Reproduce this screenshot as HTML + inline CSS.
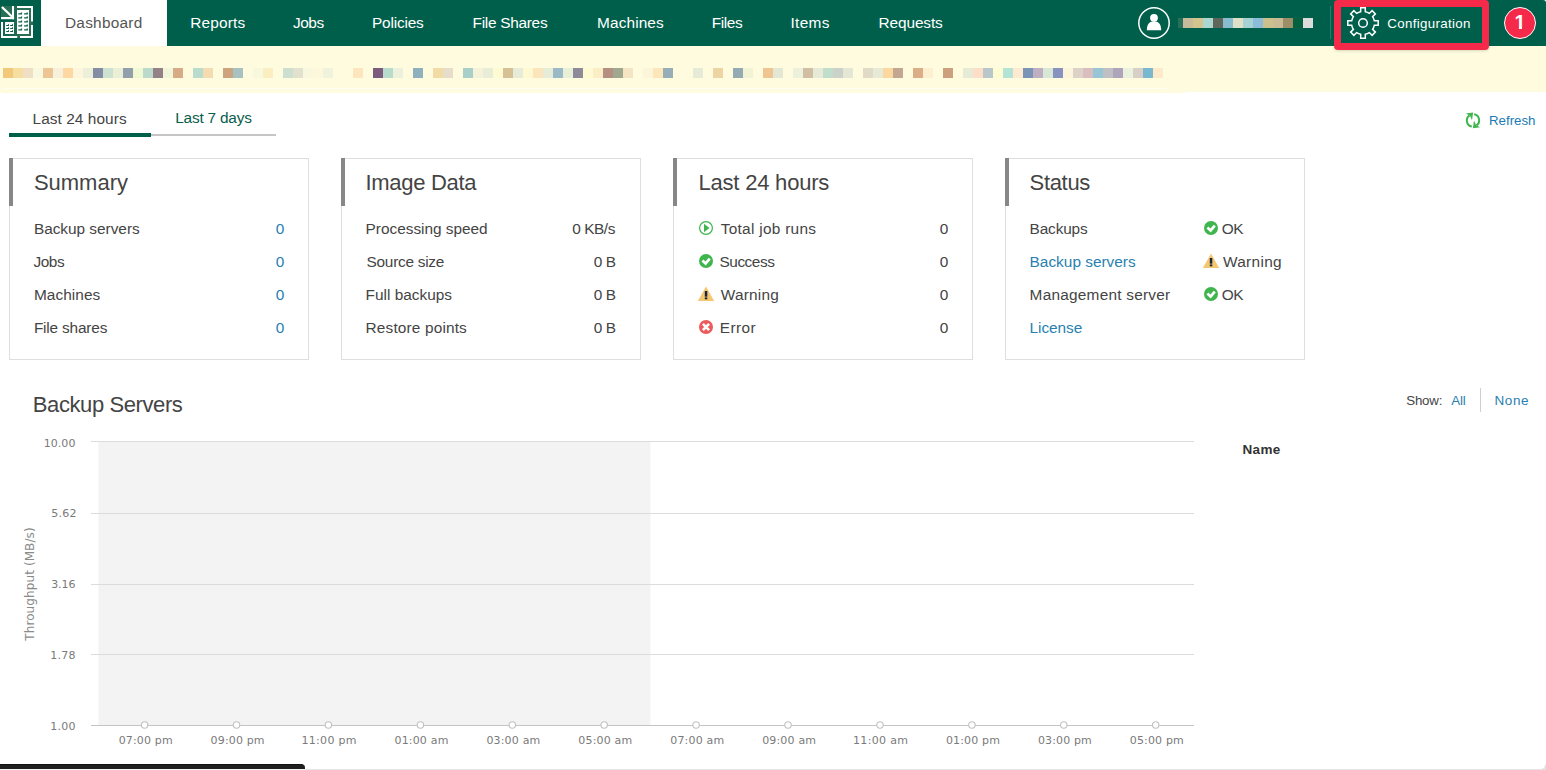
<!DOCTYPE html>
<html lang="en"><head><meta charset="utf-8"><title>Dashboard</title>
<style>
html,body{margin:0;padding:0}
body{width:1546px;height:770px;overflow:hidden;background:#fff;position:relative;font-family:"Liberation Sans", sans-serif;}
.abs{position:absolute;display:block}
.t{position:absolute;white-space:nowrap;display:block;margin:0;font-weight:400}
#hdr{position:absolute;left:0;top:0;width:1546px;height:46px;background:#005f4b;border-top-right-radius:3px}
#tab{position:absolute;left:41px;top:0;width:126px;height:46px;background:#fff}
#banner{position:absolute;left:0;top:46px;width:1546px;height:46px;background:#fffbde}
#banner i{position:absolute;top:22px;width:10px;height:10px}
#banner s{position:absolute;left:0;top:46px;width:1186px;height:1px;background:#fffbde}
#banner u{position:absolute;left:3px;top:42px;width:1163px;height:1px;background:#fffef3}
#umos i{position:absolute;top:18px;height:10px;width:10px}
#cfg{position:absolute;z-index:5;left:1334px;top:0px;width:141px;height:36px;border:7px solid #f5294a;border-radius:4px;box-shadow:0 1px 3px rgba(0,0,0,.15)}
#sep{position:absolute;left:1330px;top:6px;width:1px;height:33px;background:#2c7a68}
#badge{position:absolute;left:1504px;top:7px;width:30px;height:30px;border-radius:50%;background:#f5294a;border:1.8px solid #fff;box-sizing:border-box;width:32px;height:32px}
#badge span{position:absolute;left:9.4px;top:2.2px;color:#fff;font-weight:700;font-size:20px;line-height:24px;clip-path:polygon(0 0,100% 0,100% 16.9px,7.6px 16.9px,7.6px 100%,4.5px 100%,4.5px 16.9px,0 16.9px)}
.card{position:absolute;top:158px;width:298px;height:200px;border:1px solid #dedede;background:#fff}
.card b{position:absolute;left:-1px;top:-1px;width:4px;height:48px;background:#878787}
#tl1{position:absolute;left:9px;top:133px;width:142px;height:4px;background:#005f4b}
#tl2{position:absolute;left:151px;top:134px;width:125px;height:2px;background:#c6c6c6}
#vsep{position:absolute;left:1480px;top:388px;width:1px;height:24px;background:#cfcfcf}
#ylab{position:absolute;left:30px;top:583.5px;width:0;height:0}
#ylab span{position:absolute;white-space:nowrap;transform:translate(-50%,-50%) rotate(-90deg);font-family:'DejaVu Sans','Liberation Sans',sans-serif;font-size:12px;color:#8a8a8a;letter-spacing:0.1px}
#blk{position:absolute;left:0;top:764px;width:305px;height:5px;background:#1f1f1f;border-top:1px solid #121212;box-sizing:border-box;border-top-right-radius:4px}
#botl{position:absolute;left:0;top:769px;width:1546px;height:1px;background:linear-gradient(90deg,#f4f4f4 0,#f4f4f4 305px,#e4e4e4 305px)}
#brc{position:absolute;left:1540px;top:764px;width:6px;height:6px;background:radial-gradient(circle at 0 0,rgba(230,230,230,0) 4.6px,#e2e2e2 5.8px)}
</style></head><body>
<div id="hdr"></div><div id="tab"></div>
<svg class="abs" style="left:0;top:0" width="41" height="46" viewBox="0 0 41 46">
<rect x="1" y="6" width="32" height="32" fill="#2a6e56"/>
<rect x="0" y="19.2" width="15" height="2.6" fill="#005f4b"/>
<rect x="3" y="21.8" width="11.2" height="14" fill="#16664f"/>
<path d="M1.9 7.0 L12.4 17" stroke="#fff" stroke-width="2.3" fill="none"/>
<rect x="12" y="6" width="2.2" height="13.2" fill="#fff"/>
<rect x="1" y="17" width="13.2" height="2.2" fill="#fff"/>
<rect x="14.2" y="6" width="2.6" height="30" fill="#1d6a52"/>
<path d="M17 7 H32 V21.6 M32 25 V37 H20 M17.2 37 H2 V22" stroke="#fff" stroke-width="2" fill="none"/>
<rect x="17" y="10" width="12" height="24" fill="#fff"/>
<rect x="5" y="22" width="9" height="12" fill="#fff"/>
<g fill="#0a6048">
<path d="M18.3 14.6h3.8v-2.2h-1.3v.9h-2.5zM24.1 14.6h3.8v-2.2h-1.3v.9h-2.5z"/>
<path d="M18.3 18.6h3.8v-2.2h-1.3v.9h-2.5zM24.1 18.6h3.8v-2.2h-1.3v.9h-2.5z"/>
<path d="M18.3 22.6h3.8v-2.2h-1.3v.9h-2.5zM24.1 22.6h3.8v-2.2h-1.3v.9h-2.5z"/>
<path d="M18.3 26.6h3.8v-2.2h-1.3v.9h-2.5zM24.1 26.6h3.8v-2.2h-1.3v.9h-2.5z"/>
<path d="M18.3 30.6h3.8v-2.2h-1.3v.9h-2.5zM24.1 30.6h3.8v-2.2h-1.3v.9h-2.5z"/>
<path d="M6.2 26.0h2.8v-1.7h-1v.7h-1.8zM10.2 26.0h2.8v-1.7h-1v.7h-1.8z"/>
<path d="M6.2 29.0h2.8v-1.7h-1v.7h-1.8zM10.2 29.0h2.8v-1.7h-1v.7h-1.8z"/>
<path d="M6.2 32.0h2.8v-1.7h-1v.7h-1.8zM10.2 32.0h2.8v-1.7h-1v.7h-1.8z"/>
</g></svg>
<svg class="abs" style="left:1136px;top:5px" width="36" height="36" viewBox="0 0 36 36">
<circle cx="18" cy="18" r="15.2" fill="none" stroke="#fff" stroke-width="1.5"/>
<circle cx="18" cy="12.8" r="3.9" fill="#fff"/>
<path d="M10.8 25.2 C10.8 19.3 13.5 16.2 18 16.2 C22.5 16.2 25.2 19.3 25.2 25.2Z" fill="#fff"/></svg>
<div id="umos"><i style="left:1178px;width:5px;background:#2a6e5c"></i><i style="left:1183px;width:10px;background:#c8bb9a"></i><i style="left:1193px;width:10px;background:#d3c38c"></i><i style="left:1203px;width:10px;background:#acd6d0"></i><i style="left:1213px;width:10px;background:#5f665b"></i><i style="left:1223px;width:10px;background:#88bdd0"></i><i style="left:1233px;width:10px;background:#dfe0c6"></i><i style="left:1243px;width:10px;background:#a6d2d3"></i><i style="left:1253px;width:10px;background:#8bbcd8"></i><i style="left:1263px;width:10px;background:#ccc18c"></i><i style="left:1273px;width:10px;background:#c9ba96"></i><i style="left:1283px;width:10px;background:#9c8f67"></i><i style="left:1293px;width:10px;background:#04603f"></i><i style="left:1303px;width:10px;background:#dddcdc"></i></div>
<div id="sep"></div>
<div id="cfg"></div>
<svg class="abs" style="left:1343px;top:3px" width="40" height="40" viewBox="1343 3 40 40"><path d="M1360.70 11.73L1360.70 7.80L1365.30 7.80L1365.30 11.73A11.5 11.5 0 0 1 1369.34 13.41L1372.12 10.63L1375.37 13.88L1372.59 16.66A11.5 11.5 0 0 1 1374.27 20.70L1378.20 20.70L1378.20 25.30L1374.27 25.30A11.5 11.5 0 0 1 1372.59 29.34L1375.37 32.12L1372.12 35.37L1369.34 32.59A11.5 11.5 0 0 1 1365.30 34.27L1365.30 38.20L1360.70 38.20L1360.70 34.27A11.5 11.5 0 0 1 1356.66 32.59L1353.88 35.37L1350.63 32.12L1353.41 29.34A11.5 11.5 0 0 1 1351.73 25.30L1347.80 25.30L1347.80 20.70L1351.73 20.70A11.5 11.5 0 0 1 1353.41 16.66L1350.63 13.88L1353.88 10.63L1356.66 13.41A11.5 11.5 0 0 1 1360.70 11.73Z" fill="none" stroke="#fff" stroke-width="1.5" stroke-linejoin="miter"/><circle cx="1363" cy="23" r="4.3" fill="none" stroke="#fff" stroke-width="1.5"/></svg>
<div id="badge"><span>1</span></div>
<div id="banner"><i style="left:3px;background:#f2c97a"></i><i style="left:13px;background:#f6dda0"></i><i style="left:23px;background:#efe0c5"></i><i style="left:33px;background:#f8f9e0"></i><i style="left:43px;background:#edc696"></i><i style="left:53px;background:#f7f1dc"></i><i style="left:63px;background:#fdd8a3"></i><i style="left:73px;background:#fef6dc"></i><i style="left:83px;background:#edf0d8"></i><i style="left:93px;background:#848da3"></i><i style="left:103px;background:#cde2d0"></i><i style="left:113px;background:#e9f0d6"></i><i style="left:123px;background:#93a0ab"></i><i style="left:133px;background:#f0f9d2"></i><i style="left:143px;background:#bcdacb"></i><i style="left:153px;background:#958088"></i><i style="left:163px;background:#f1f6da"></i><i style="left:173px;background:#d7ab85"></i><i style="left:193px;background:#b9dccd"></i><i style="left:203px;background:#f4dbb0"></i><i style="left:223px;background:#cea47f"></i><i style="left:233px;background:#a8c2c2"></i><i style="left:253px;background:#f7f8de"></i><i style="left:263px;background:#fbeec0"></i><i style="left:283px;background:#cde0cf"></i><i style="left:293px;background:#e2e1cd"></i><i style="left:303px;background:#f8f8de"></i><i style="left:313px;background:#fdf7dc"></i><i style="left:323px;background:#f0f3dc"></i><i style="left:353px;background:#fde6be"></i><i style="left:373px;background:#7c5b7c"></i><i style="left:383px;background:#b8dccb"></i><i style="left:393px;background:#edf1dc"></i><i style="left:413px;background:#8fb1bd"></i><i style="left:433px;background:#f3dba5"></i><i style="left:443px;background:#e6deca"></i><i style="left:463px;background:#a8cfc8"></i><i style="left:473px;background:#f4f2d8"></i><i style="left:483px;background:#e9edd8"></i><i style="left:493px;background:#fefad2"></i><i style="left:503px;background:#d6c096"></i><i style="left:513px;background:#e6ecd8"></i><i style="left:523px;background:#fef9d0"></i><i style="left:533px;background:#fce5bb"></i><i style="left:543px;background:#e6ecd8"></i><i style="left:553px;background:#9bb9c6"></i><i style="left:563px;background:#e9f0d8"></i><i style="left:573px;background:#8e8a9a"></i><i style="left:583px;background:#fefad2"></i><i style="left:593px;background:#fbeec6"></i><i style="left:603px;background:#b58f80"></i><i style="left:613px;background:#a0a98f"></i><i style="left:623px;background:#f5e4c4"></i><i style="left:643px;background:#fcf5da"></i><i style="left:653px;background:#fde6ba"></i><i style="left:663px;background:#96aeb7"></i><i style="left:693px;background:#e6ebd8"></i><i style="left:713px;background:#ecd5a2"></i><i style="left:733px;background:#94abb3"></i><i style="left:743px;background:#f1f3d4"></i><i style="left:763px;background:#efc592"></i><i style="left:773px;background:#e3e7d4"></i><i style="left:793px;background:#ebf1da"></i><i style="left:803px;background:#d1bea3"></i><i style="left:813px;background:#e6ead6"></i><i style="left:823px;background:#c0decb"></i><i style="left:833px;background:#ccd2ca"></i><i style="left:843px;background:#e3e7d4"></i><i style="left:863px;background:#e1dac6"></i><i style="left:873px;background:#e6ead6"></i><i style="left:883px;background:#fcd8a0"></i><i style="left:893px;background:#c4a790"></i><i style="left:913px;background:#dcae88"></i><i style="left:923px;background:#feefd0"></i><i style="left:943px;background:#cca07c"></i><i style="left:963px;background:#e6ebd6"></i><i style="left:973px;background:#fedec8"></i><i style="left:983px;background:#bac7ca"></i><i style="left:993px;background:#fefcd2"></i><i style="left:1003px;background:#b5e4d4"></i><i style="left:1013px;background:#fdead0"></i><i style="left:1023px;background:#7994b6"></i><i style="left:1033px;background:#bfafc2"></i><i style="left:1043px;background:#d8e7d6"></i><i style="left:1053px;background:#8793be"></i><i style="left:1063px;background:#fcf5dc"></i><i style="left:1073px;background:#dcd2c8"></i><i style="left:1083px;background:#d9bec0"></i><i style="left:1093px;background:#96c6d6"></i><i style="left:1103px;background:#c0bfc4"></i><i style="left:1113px;background:#afa5bb"></i><i style="left:1123px;background:#eaf1dc"></i><i style="left:1133px;background:#d8cfc6"></i><i style="left:1143px;background:#7ab8cf"></i><i style="left:1153px;background:#fee9c8"></i><u></u><s></s></div>
<div id="tl1"></div><div id="tl2"></div>
<svg class="abs" style="left:1464px;top:111px" width="18" height="19" viewBox="0 0 18 19">
<g fill="none" stroke="#3fb54d" stroke-width="2">
<path d="M7.8 15.5 A6.1 6.1 0 0 1 5.6 4.4"/>
<path d="M10.2 3.3 A6.1 6.1 0 0 1 12.4 14.4"/>
</g>
<path d="M1.9 2.6 L9.1 1.6 L8.0 9.2 L6.0 4.8 Z" fill="#3fb54d"/>
<path d="M16.1 16.2 L8.9 17.2 L10.0 9.6 L12.0 14.0 Z" fill="#3fb54d"/>
</svg>
<div class="card" style="left:9px"><b></b></div><div class="card" style="left:341px"><b></b></div><div class="card" style="left:673px"><b></b></div><div class="card" style="left:1005px"><b></b></div>
<svg class="abs" style="left:698px;top:220px" width="16" height="16" viewBox="0 0 16 16"><circle cx="8" cy="8" r="6.4" fill="#fff" stroke="#3fb54d" stroke-width="1.2"/><path d="M6.0 3.7 L11.4 8 L6.0 12.3Z" fill="#3fb54d"/></svg><svg class="abs" style="left:698px;top:253px" width="16" height="16" viewBox="0 0 16 16"><circle cx="8" cy="8" r="7" fill="#3fb54d"/><path d="M4.4 7.5 L7.6 10.5 L11.8 5.7" fill="none" stroke="#fff" stroke-width="2.7"/></svg><svg class="abs" style="left:697px;top:286px" width="18" height="16" viewBox="0 0 18 16"><path d="M9 0.6 L17.2 14.9 L0.8 14.9Z" fill="#f3c870"/><rect x="7.8" y="5.0" width="2.5" height="5.7" fill="#1c2340"/><rect x="7.8" y="11.4" width="2.5" height="1.9" fill="#1c2340"/></svg><svg class="abs" style="left:698px;top:319px" width="16" height="16" viewBox="0 0 16 16"><circle cx="8" cy="8" r="7" fill="#ee5a5a"/><path d="M4.9 4.9 L11.1 11.1 M11.1 4.9 L4.9 11.1" fill="none" stroke="#fff" stroke-width="2.7"/></svg><svg class="abs" style="left:1203px;top:220px" width="16" height="16" viewBox="0 0 16 16"><circle cx="8" cy="8" r="7" fill="#3fb54d"/><path d="M4.4 7.5 L7.6 10.5 L11.8 5.7" fill="none" stroke="#fff" stroke-width="2.7"/></svg><svg class="abs" style="left:1202px;top:253px" width="18" height="16" viewBox="0 0 18 16"><path d="M9 0.6 L17.2 14.9 L0.8 14.9Z" fill="#f3c870"/><rect x="7.8" y="5.0" width="2.5" height="5.7" fill="#1c2340"/><rect x="7.8" y="11.4" width="2.5" height="1.9" fill="#1c2340"/></svg><svg class="abs" style="left:1203px;top:286px" width="16" height="16" viewBox="0 0 16 16"><circle cx="8" cy="8" r="7" fill="#3fb54d"/><path d="M4.4 7.5 L7.6 10.5 L11.8 5.7" fill="none" stroke="#fff" stroke-width="2.7"/></svg>
<svg class="abs" style="left:0;top:430px" width="1546" height="310" viewBox="0 430 1546 310"><rect x="98.4" y="441.5" width="552" height="284" fill="#f3f3f3"/><line x1="91" x2="1194" y1="441.5" y2="441.5" stroke="#dcdcdc" stroke-width="1"/><line x1="91" x2="1194" y1="513.5" y2="513.5" stroke="#dcdcdc" stroke-width="1"/><line x1="91" x2="1194" y1="584.5" y2="584.5" stroke="#dcdcdc" stroke-width="1"/><line x1="91" x2="1194" y1="654.5" y2="654.5" stroke="#dcdcdc" stroke-width="1"/><line x1="91" x2="1194" y1="725.5" y2="725.5" stroke="#c4c4c4" stroke-width="1"/><circle cx="144.6" cy="725" r="3.2" fill="#fff" stroke="#c2c2c2" stroke-width="1.1"/><circle cx="236.5" cy="725" r="3.2" fill="#fff" stroke="#c2c2c2" stroke-width="1.1"/><circle cx="328.4" cy="725" r="3.2" fill="#fff" stroke="#c2c2c2" stroke-width="1.1"/><circle cx="420.4" cy="725" r="3.2" fill="#fff" stroke="#c2c2c2" stroke-width="1.1"/><circle cx="512.3" cy="725" r="3.2" fill="#fff" stroke="#c2c2c2" stroke-width="1.1"/><circle cx="604.2" cy="725" r="3.2" fill="#fff" stroke="#c2c2c2" stroke-width="1.1"/><circle cx="696.1" cy="725" r="3.2" fill="#fff" stroke="#c2c2c2" stroke-width="1.1"/><circle cx="788.0" cy="725" r="3.2" fill="#fff" stroke="#c2c2c2" stroke-width="1.1"/><circle cx="880.0" cy="725" r="3.2" fill="#fff" stroke="#c2c2c2" stroke-width="1.1"/><circle cx="971.9" cy="725" r="3.2" fill="#fff" stroke="#c2c2c2" stroke-width="1.1"/><circle cx="1063.8" cy="725" r="3.2" fill="#fff" stroke="#c2c2c2" stroke-width="1.1"/><circle cx="1155.7" cy="725" r="3.2" fill="#fff" stroke="#c2c2c2" stroke-width="1.1"/></svg>
<div id="ylab"><span>Throughput (MB/s)</span></div>
<div id="vsep"></div>
<div id="blk"></div><div id="botl"></div><div id="brc"></div>
<span class="t" style="left:65.00px;top:12px;font-size:15.4px;line-height:21px;color:#555;letter-spacing:0.246px;">Dashboard</span>
<span class="t" style="left:190.30px;top:12px;font-size:15.4px;line-height:21px;color:#fff;letter-spacing:0.151px;">Reports</span>
<span class="t" style="left:293.02px;top:12px;font-size:15.4px;line-height:21px;color:#fff;letter-spacing:-0.450px;">Jobs</span>
<span class="t" style="left:371.90px;top:12px;font-size:15.4px;line-height:21px;color:#fff;letter-spacing:-0.163px;">Policies</span>
<span class="t" style="left:472.60px;top:12px;font-size:15.4px;line-height:21px;color:#fff;letter-spacing:-0.284px;">File Shares</span>
<span class="t" style="left:597.10px;top:12px;font-size:15.4px;line-height:21px;color:#fff;letter-spacing:0.104px;">Machines</span>
<span class="t" style="left:711.80px;top:12px;font-size:15.4px;line-height:21px;color:#fff;letter-spacing:-0.400px;">Files</span>
<span class="t" style="left:790.40px;top:12px;font-size:15.4px;line-height:21px;color:#fff;letter-spacing:0.367px;">Items</span>
<span class="t" style="left:878.60px;top:12px;font-size:15.4px;line-height:21px;color:#fff;letter-spacing:-0.118px;">Requests</span>
<span class="t" style="left:1387.30px;top:14px;font-size:13.3px;line-height:19px;color:#fff;letter-spacing:0.325px;">Configuration</span>
<span class="t" style="left:32.50px;top:108px;font-size:15.4px;line-height:21px;color:#444;letter-spacing:0.070px;">Last 24 hours</span>
<span class="t" style="left:175.20px;top:107px;font-size:15.4px;line-height:21px;color:#0a5e4c;letter-spacing:-0.202px;">Last 7 days</span>
<span class="t" style="left:1489.00px;top:111px;font-size:13.3px;line-height:19px;color:#1b7bb4;letter-spacing:-0.011px;">Refresh</span>
<span class="t" style="left:33.90px;top:168px;font-size:22px;line-height:29px;color:#444;letter-spacing:-0.004px;">Summary</span>
<span class="t" style="left:365.50px;top:168px;font-size:22px;line-height:29px;color:#444;letter-spacing:-0.310px;">Image Data</span>
<span class="t" style="left:698.50px;top:168px;font-size:22px;line-height:29px;color:#444;letter-spacing:-0.209px;">Last 24 hours</span>
<span class="t" style="left:1029.60px;top:168px;font-size:22px;line-height:29px;color:#444;letter-spacing:-0.334px;">Status</span>
<span class="t" style="left:33.90px;top:218px;font-size:15.4px;line-height:21px;color:#444;letter-spacing:-0.021px;">Backup servers</span>
<span class="t" style="left:275.85px;top:218px;font-size:15.4px;line-height:21px;color:#2a7fb0;letter-spacing:0.000px;">0</span>
<span class="t" style="left:33.52px;top:251px;font-size:15.4px;line-height:21px;color:#444;letter-spacing:-0.450px;">Jobs</span>
<span class="t" style="left:275.85px;top:251px;font-size:15.4px;line-height:21px;color:#2a7fb0;letter-spacing:0.000px;">0</span>
<span class="t" style="left:33.90px;top:284px;font-size:15.4px;line-height:21px;color:#444;letter-spacing:0.075px;">Machines</span>
<span class="t" style="left:275.85px;top:284px;font-size:15.4px;line-height:21px;color:#2a7fb0;letter-spacing:0.000px;">0</span>
<span class="t" style="left:33.90px;top:317px;font-size:15.4px;line-height:21px;color:#444;letter-spacing:-0.177px;">File shares</span>
<span class="t" style="left:275.85px;top:317px;font-size:15.4px;line-height:21px;color:#2a7fb0;letter-spacing:0.000px;">0</span>
<span class="t" style="left:365.60px;top:218px;font-size:15.4px;line-height:21px;color:#444;letter-spacing:-0.019px;">Processing speed</span>
<span class="t" style="left:572.31px;top:218px;font-size:15.4px;line-height:21px;color:#444;letter-spacing:-0.450px;">0 KB/s</span>
<span class="t" style="left:366.60px;top:251px;font-size:15.4px;line-height:21px;color:#444;letter-spacing:-0.275px;">Source size</span>
<span class="t" style="left:593.76px;top:251px;font-size:15.4px;line-height:21px;color:#444;letter-spacing:-0.450px;">0 B</span>
<span class="t" style="left:365.60px;top:284px;font-size:15.4px;line-height:21px;color:#444;letter-spacing:-0.000px;">Full backups</span>
<span class="t" style="left:593.76px;top:284px;font-size:15.4px;line-height:21px;color:#444;letter-spacing:-0.450px;">0 B</span>
<span class="t" style="left:365.60px;top:317px;font-size:15.4px;line-height:21px;color:#444;letter-spacing:0.151px;">Restore points</span>
<span class="t" style="left:593.76px;top:317px;font-size:15.4px;line-height:21px;color:#444;letter-spacing:-0.450px;">0 B</span>
<span class="t" style="left:720.70px;top:218px;font-size:15.4px;line-height:21px;color:#444;letter-spacing:0.289px;">Total job runs</span>
<span class="t" style="left:939.75px;top:218px;font-size:15.4px;line-height:21px;color:#444;letter-spacing:0.000px;">0</span>
<span class="t" style="left:719.46px;top:251px;font-size:15.4px;line-height:21px;color:#444;letter-spacing:-0.450px;">Success</span>
<span class="t" style="left:939.75px;top:251px;font-size:15.4px;line-height:21px;color:#444;letter-spacing:0.000px;">0</span>
<span class="t" style="left:720.70px;top:284px;font-size:15.4px;line-height:21px;color:#444;letter-spacing:0.237px;">Warning</span>
<span class="t" style="left:939.75px;top:284px;font-size:15.4px;line-height:21px;color:#444;letter-spacing:0.000px;">0</span>
<span class="t" style="left:719.70px;top:317px;font-size:15.4px;line-height:21px;color:#444;letter-spacing:0.456px;">Error</span>
<span class="t" style="left:939.75px;top:317px;font-size:15.4px;line-height:21px;color:#444;letter-spacing:0.000px;">0</span>
<span class="t" style="left:1029.60px;top:218px;font-size:15.4px;line-height:21px;color:#444;letter-spacing:-0.156px;">Backups</span>
<span class="t" style="left:1221.74px;top:218px;font-size:15.4px;line-height:21px;color:#444;letter-spacing:-0.450px;">OK</span>
<span class="t" style="left:1029.60px;top:251px;font-size:15.4px;line-height:21px;color:#2a7fb0;letter-spacing:0.002px;">Backup servers</span>
<span class="t" style="left:1222.90px;top:251px;font-size:15.4px;line-height:21px;color:#444;letter-spacing:0.337px;">Warning</span>
<span class="t" style="left:1029.60px;top:284px;font-size:15.4px;line-height:21px;color:#444;letter-spacing:0.228px;">Management server</span>
<span class="t" style="left:1221.74px;top:284px;font-size:15.4px;line-height:21px;color:#444;letter-spacing:-0.450px;">OK</span>
<span class="t" style="left:1029.60px;top:317px;font-size:15.4px;line-height:21px;color:#2a7fb0;letter-spacing:-0.065px;">License</span>
<span class="t" style="left:32.80px;top:390px;font-size:22px;line-height:29px;color:#444;letter-spacing:-0.407px;">Backup Servers</span>
<span class="t" style="left:1406.20px;top:391px;font-size:13.3px;line-height:19px;color:#444;letter-spacing:-0.165px;">Show:</span>
<span class="t" style="left:1451.30px;top:391px;font-size:13.3px;line-height:19px;color:#2a7fb0;letter-spacing:-0.212px;">All</span>
<span class="t" style="left:1494.60px;top:391px;font-size:13.5px;line-height:19px;color:#2a7fb0;letter-spacing:0.512px;">None</span>
<span class="t" style="left:1242.60px;top:440px;font-size:13.5px;line-height:19px;color:#333;letter-spacing:0.280px;font-weight:700;">Name</span>
<span class="t" style="left:43.80px;top:435px;font-size:11px;line-height:17px;color:#7a7a7a;letter-spacing:0.027px;font-family:'DejaVu Sans', 'Liberation Sans', sans-serif;">10.00</span>
<span class="t" style="left:51.20px;top:505px;font-size:11px;line-height:17px;color:#7a7a7a;letter-spacing:0.235px;font-family:'DejaVu Sans', 'Liberation Sans', sans-serif;">5.62</span>
<span class="t" style="left:51.20px;top:576px;font-size:11px;line-height:17px;color:#7a7a7a;letter-spacing:-0.098px;font-family:'DejaVu Sans', 'Liberation Sans', sans-serif;">3.16</span>
<span class="t" style="left:50.20px;top:647px;font-size:11px;line-height:17px;color:#7a7a7a;letter-spacing:0.235px;font-family:'DejaVu Sans', 'Liberation Sans', sans-serif;">1.78</span>
<span class="t" style="left:50.20px;top:718px;font-size:11px;line-height:17px;color:#7a7a7a;letter-spacing:0.235px;font-family:'DejaVu Sans', 'Liberation Sans', sans-serif;">1.00</span>
<span class="t" style="left:118.70px;top:732px;font-size:11px;line-height:17px;color:#7a7a7a;letter-spacing:0.146px;font-family:'DejaVu Sans', 'Liberation Sans', sans-serif;">07:00 pm</span>
<span class="t" style="left:210.62px;top:732px;font-size:11px;line-height:17px;color:#7a7a7a;letter-spacing:0.146px;font-family:'DejaVu Sans', 'Liberation Sans', sans-serif;">09:00 pm</span>
<span class="t" style="left:301.54px;top:732px;font-size:11px;line-height:17px;color:#7a7a7a;letter-spacing:0.289px;font-family:'DejaVu Sans', 'Liberation Sans', sans-serif;">11:00 pm</span>
<span class="t" style="left:394.46px;top:732px;font-size:11px;line-height:17px;color:#7a7a7a;letter-spacing:0.180px;font-family:'DejaVu Sans', 'Liberation Sans', sans-serif;">01:00 am</span>
<span class="t" style="left:486.38px;top:732px;font-size:11px;line-height:17px;color:#7a7a7a;letter-spacing:0.180px;font-family:'DejaVu Sans', 'Liberation Sans', sans-serif;">03:00 am</span>
<span class="t" style="left:578.30px;top:732px;font-size:11px;line-height:17px;color:#7a7a7a;letter-spacing:0.180px;font-family:'DejaVu Sans', 'Liberation Sans', sans-serif;">05:00 am</span>
<span class="t" style="left:670.22px;top:732px;font-size:11px;line-height:17px;color:#7a7a7a;letter-spacing:0.180px;font-family:'DejaVu Sans', 'Liberation Sans', sans-serif;">07:00 am</span>
<span class="t" style="left:762.14px;top:732px;font-size:11px;line-height:17px;color:#7a7a7a;letter-spacing:0.180px;font-family:'DejaVu Sans', 'Liberation Sans', sans-serif;">09:00 am</span>
<span class="t" style="left:853.06px;top:732px;font-size:11px;line-height:17px;color:#7a7a7a;letter-spacing:0.323px;font-family:'DejaVu Sans', 'Liberation Sans', sans-serif;">11:00 am</span>
<span class="t" style="left:945.98px;top:732px;font-size:11px;line-height:17px;color:#7a7a7a;letter-spacing:0.146px;font-family:'DejaVu Sans', 'Liberation Sans', sans-serif;">01:00 pm</span>
<span class="t" style="left:1037.90px;top:732px;font-size:11px;line-height:17px;color:#7a7a7a;letter-spacing:0.146px;font-family:'DejaVu Sans', 'Liberation Sans', sans-serif;">03:00 pm</span>
<span class="t" style="left:1129.82px;top:732px;font-size:11px;line-height:17px;color:#7a7a7a;letter-spacing:0.146px;font-family:'DejaVu Sans', 'Liberation Sans', sans-serif;">05:00 pm</span>
</body></html>
